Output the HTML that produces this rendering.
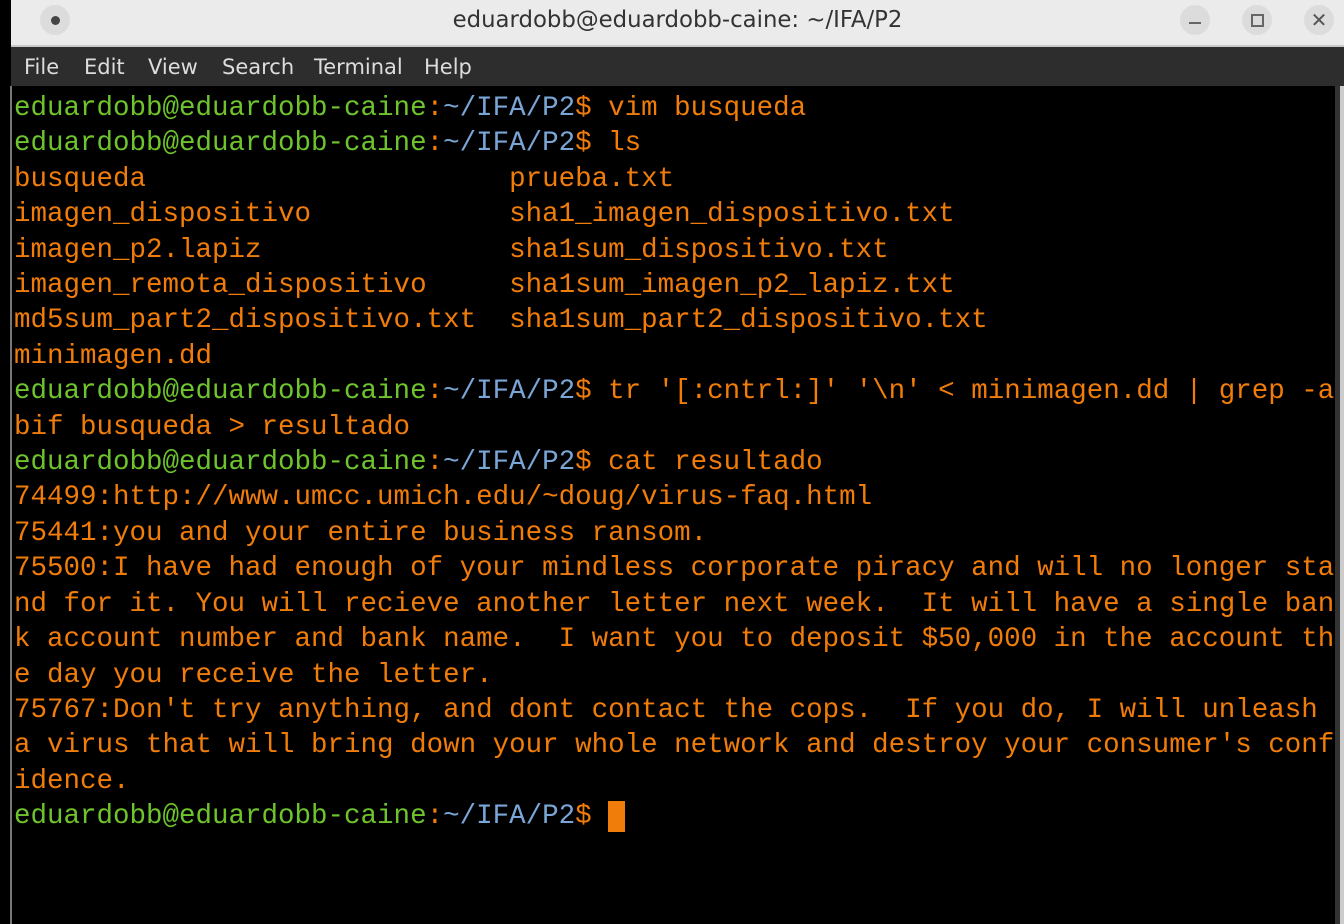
<!DOCTYPE html>
<html><head><meta charset="utf-8"><style>
*{margin:0;padding:0}
body{width:1344px;height:924px;background:#000;position:relative;overflow:hidden;font-family:"Liberation Mono",monospace}
#title{position:absolute;left:11px;top:0;width:1333px;height:45px;background:#ebebeb;border-bottom:2px solid #c8c8c8}
#title .t{position:absolute;left:0;right:0;top:7px;text-align:center;font:22.8px "DejaVu Sans",sans-serif;color:#333}
.btn{position:absolute;top:5px;width:30px;height:30px;border-radius:50%;background:#dcdcdc}
#menu{position:absolute;left:11px;top:47px;width:1333px;height:39px;background:#2d2d2d;font:21px "DejaVu Sans",sans-serif;color:#ddd}
#menu span{position:absolute;top:8px}
#term{position:absolute;left:12px;top:86px;width:1323px;height:838px;background:#000}
#lb{position:absolute;left:10px;top:86px;width:2px;height:838px;background:#777}
#sb{position:absolute;left:1335px;top:86px;width:5px;height:838px;background:#333}
#sb2{position:absolute;left:1340px;top:86px;width:4px;height:838px;background:#ccc}
pre{position:absolute;left:14px;top:91px;font:27.5px/35.4px "Liberation Mono",monospace;color:#f07c0a;white-space:pre}
.g{color:#6ec42c}.b{color:#79a6d6}
.cur{background:#f07c0a}
</style></head><body>
<div id="title"><div class="t">eduardobb@eduardobb-caine: ~/IFA/P2</div>
<div class="btn" style="left:29px"><div style="position:absolute;left:11px;top:11px;width:9px;height:9px;border-radius:50%;background:#444"></div></div>
<div class="btn" style="left:1169px"><div style="position:absolute;left:9px;top:17px;width:12px;height:2px;background:#666"></div></div>
<div class="btn" style="left:1231px"><div style="position:absolute;left:9px;top:9px;width:9px;height:9px;border:2px solid #666"></div></div>
<div class="btn" style="left:1293px"><div style="position:absolute;left:0;top:3px;width:30px;text-align:center;font:20px 'DejaVu Sans',sans-serif;color:#555">✕</div></div>
</div>
<div id="menu"><span style="left:13px">File</span><span style="left:73px">Edit</span><span style="left:137px">View</span><span style="left:211px">Search</span><span style="left:303px">Terminal</span><span style="left:413px">Help</span></div>
<div id="term"></div><div id="lb"></div><div id="sb"></div><div id="sb2"></div>
<pre><span class="g">eduardobb@eduardobb-caine</span>:<span class="b">~/IFA/P2</span>$ vim busqueda
<span class="g">eduardobb@eduardobb-caine</span>:<span class="b">~/IFA/P2</span>$ ls
busqueda                      prueba.txt
imagen_dispositivo            sha1_imagen_dispositivo.txt
imagen_p2.lapiz               sha1sum_dispositivo.txt
imagen_remota_dispositivo     sha1sum_imagen_p2_lapiz.txt
md5sum_part2_dispositivo.txt  sha1sum_part2_dispositivo.txt
minimagen.dd
<span class="g">eduardobb@eduardobb-caine</span>:<span class="b">~/IFA/P2</span>$ tr '[:cntrl:]' '\n' &lt; minimagen.dd | grep -a
bif busqueda &gt; resultado
<span class="g">eduardobb@eduardobb-caine</span>:<span class="b">~/IFA/P2</span>$ cat resultado
74499:http://www.umcc.umich.edu/~doug/virus-faq.html
75441:you and your entire business ransom.
75500:I have had enough of your mindless corporate piracy and will no longer sta
nd for it. You will recieve another letter next week.  It will have a single ban
k account number and bank name.  I want you to deposit $50,000 in the account th
e day you receive the letter.
75767:Don't try anything, and dont contact the cops.  If you do, I will unleash
a virus that will bring down your whole network and destroy your consumer's conf
idence.
<span class="g">eduardobb@eduardobb-caine</span>:<span class="b">~/IFA/P2</span>$ <span class="cur"> </span></pre>
</body></html>
